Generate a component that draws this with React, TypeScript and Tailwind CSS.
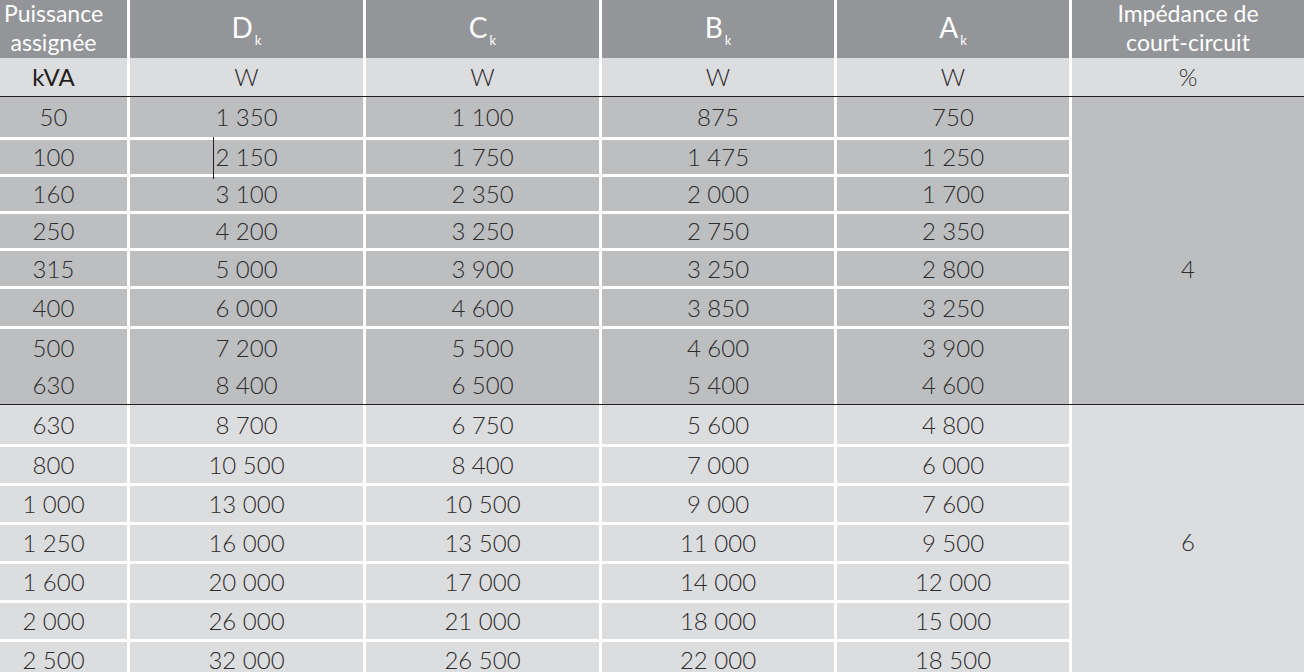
import React from 'react';

type Row = [string, string, string, string, string];

const groupA: Row[] = [
    ['50', '1 350', '1 100', '875', '750'],
    ['100', '2 150', '1 750', '1 475', '1 250'],
    ['160', '3 100', '2 350', '2 000', '1 700'],
    ['250', '4 200', '3 250', '2 750', '2 350'],
    ['315', '5 000', '3 900', '3 250', '2 800'],
    ['400', '6 000', '4 600', '3 850', '3 250'],
    ['500', '7 200', '5 500', '4 600', '3 900'],
    ['630', '8 400', '6 500', '5 400', '4 600'],
];

const groupB: Row[] = [
    ['630', '8 700', '6 750', '5 600', '4 800'],
    ['800', '10 500', '8 400', '7 000', '6 000'],
    ['1 000', '13 000', '10 500', '9 000', '7 600'],
    ['1 250', '16 000', '13 500', '11 000', '9 500'],
    ['1 600', '20 000', '17 000', '14 000', '12 000'],
    ['2 000', '26 000', '21 000', '18 000', '15 000'],
    ['2 500', '32 000', '26 500', '22 000', '18 500'],
];

// rows of the first group that have a white rule above them
const ruleA = [false, true, true, true, true, true, true, false];

const Loss: React.FC<{ letter: string }> = ({ letter }) => (
    <div className="bg-[#939598] flex items-center justify-center text-white pb-[4px] font-normal">
        <span className="text-[28px] leading-none">{letter}</span>
        <span className="text-[13px] leading-none self-end mb-[7px] ml-[2px]">k</span>
    </div>
);

const DataRow: React.FC<{ row: Row; bg: string; rule: boolean; cursor?: boolean }> = ({ row, bg, rule, cursor }) => (
    <>
        {row.map((v, i) => (
            <div
                key={i}
                className={`${bg} ${rule ? 'border-t-[3px] border-white' : ''} flex items-center justify-center ${i === 0 ? 'pr-[20px]' : ''}`}
            >
                <span className="relative">
                    {cursor && i === 1 && (
                        <span className="absolute left-[-2px] top-[-2px] bottom-[-4px] w-px bg-[#231f20]" />
                    )}
                    {v}
                </span>
            </div>
        ))}
    </>
);

const App: React.FC = () => {
    return (
        <div
            className="w-[1304px] h-[672px] overflow-hidden bg-white text-[#2d2b2c] text-[24px] font-light"
            style={{ fontFamily: 'Lato, "Open Sans", sans-serif' }}
        >
            <div className="grid grid-cols-[127px_233px_233px_232px_232px_232px] gap-x-[3px] grid-rows-[58px_38px_1px_40px_37px_37px_37px_38px_40px_40px_38px_1px_39px_39px_39px_39px_39px_39px_39px]">
                {/* header */}
                <div className="bg-[#939598] text-white text-[23px] leading-[29px] flex flex-col items-center justify-center pr-[20px] pb-[2px] font-normal">
                    <span>Puissance</span>
                    <span>assignée</span>
                </div>
                <Loss letter="D" />
                <Loss letter="C" />
                <Loss letter="B" />
                <Loss letter="A" />
                <div className="bg-[#939598] text-white text-[23px] leading-[29px] flex flex-col items-center justify-center pb-[3px] font-normal">
                    <span>Impédance de</span>
                    <span>court-circuit</span>
                </div>

                {/* units */}
                <div className="bg-[#dcdddf] flex items-center justify-center pr-[20px] font-normal text-[#231f20]">kVA</div>
                <div className="bg-[#dcdddf] flex items-center justify-center">W</div>
                <div className="bg-[#dcdddf] flex items-center justify-center">W</div>
                <div className="bg-[#dcdddf] flex items-center justify-center">W</div>
                <div className="bg-[#dcdddf] flex items-center justify-center">W</div>
                <div className="bg-[#dcdddf] flex items-center justify-center">%</div>

                <div className="col-span-6 bg-[#231f20]" />

                {/* group 4 % */}
                {groupA.map((row, r) => (
                    <React.Fragment key={r}>
                        <DataRow row={row} bg="bg-[#bcbec0]" rule={ruleA[r]} cursor={r === 1} />
                        {r === 0 && (
                            <div className="row-span-8 bg-[#bcbec0] flex items-center justify-center pt-[36px]">4</div>
                        )}
                    </React.Fragment>
                ))}

                <div className="col-span-6 bg-[#231f20]" />

                {/* group 6 % */}
                {groupB.map((row, r) => (
                    <React.Fragment key={r}>
                        <DataRow row={row} bg="bg-[#dcdddf]" rule={r > 0} />
                        {r === 0 && (
                            <div className="row-span-7 bg-[#dcdddf] flex items-center justify-center">6</div>
                        )}
                    </React.Fragment>
                ))}
            </div>
        </div>
    );
};

export default App;
